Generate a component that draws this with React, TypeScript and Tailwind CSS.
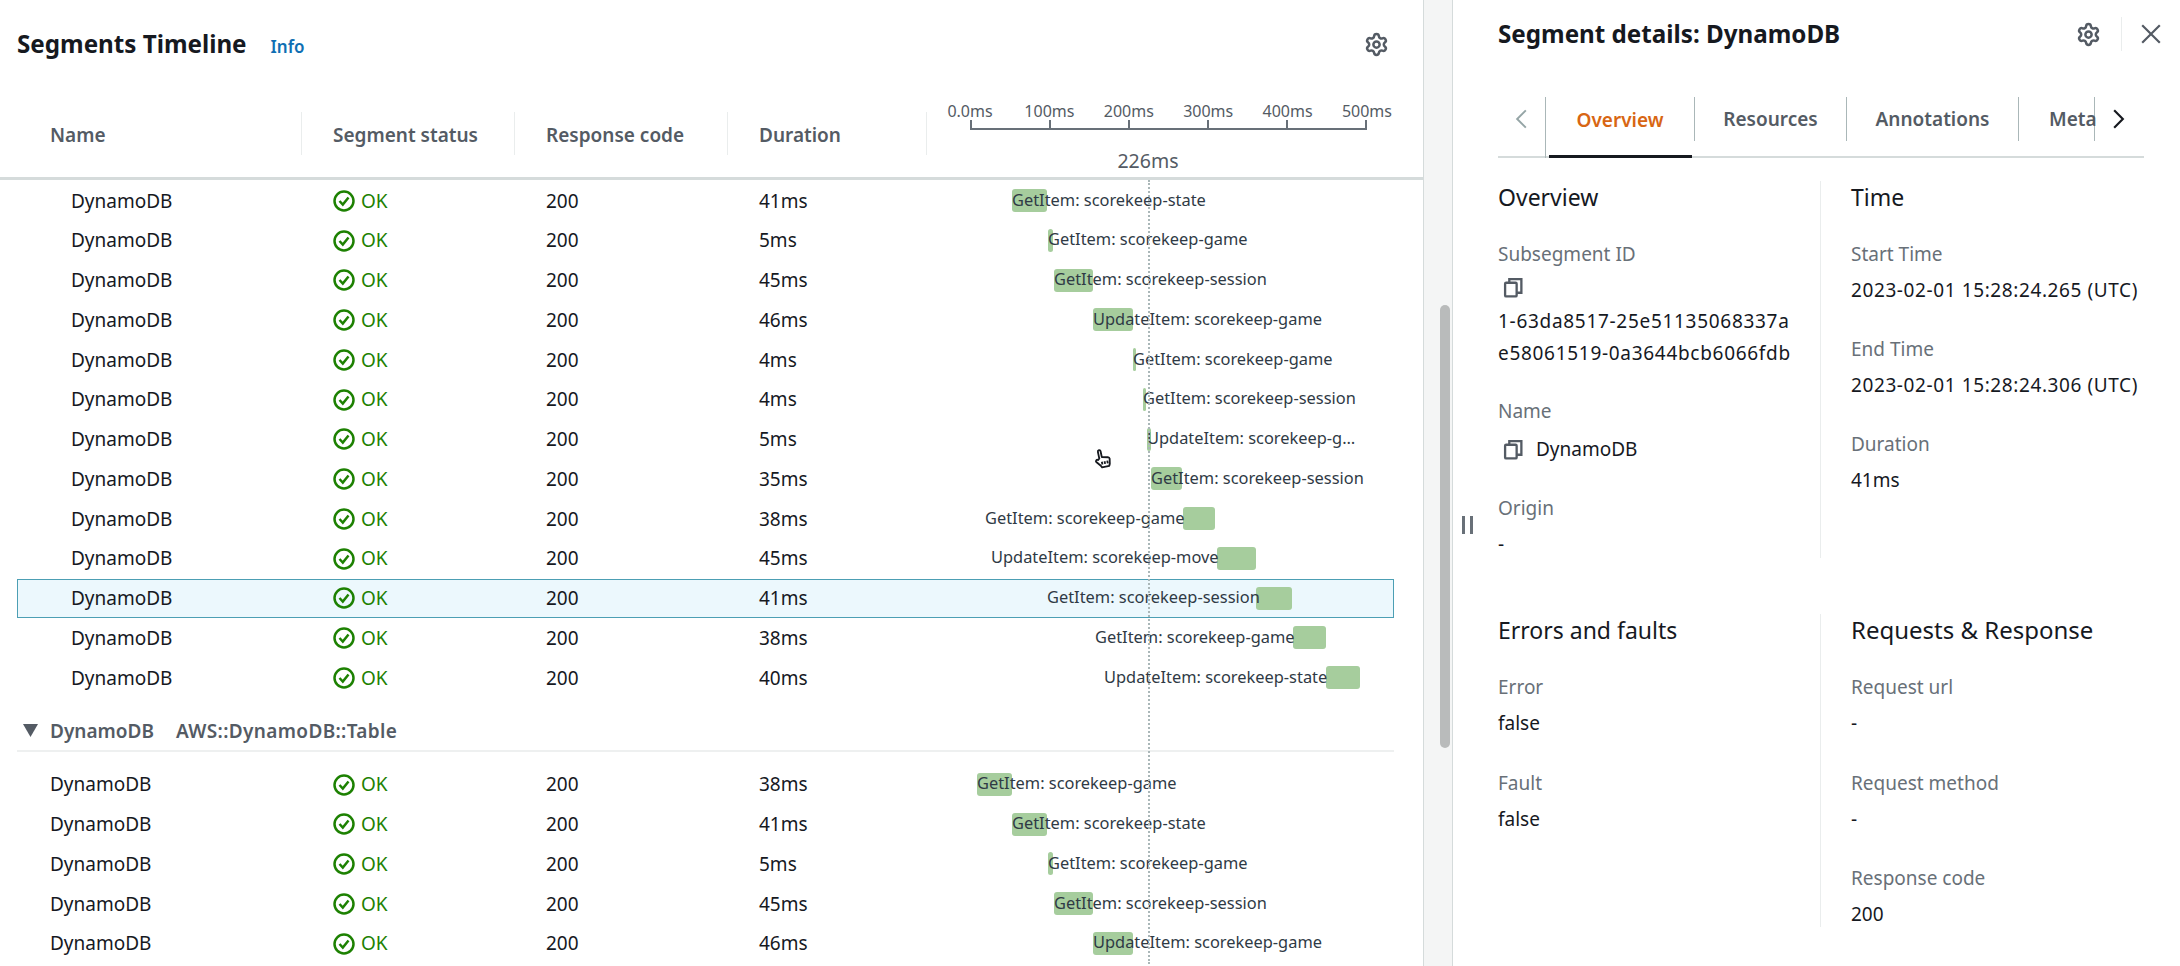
import React from 'react';
import { Settings } from 'lucide-react';

type Span = { label: string; duration: string; start: number; width: number; labelLeft?: number; selected?: boolean };

const firstGroup: Span[] = [
  { label: 'GetItem: scorekeep-state', duration: '41ms', start: 1012, width: 35 },
  { label: 'GetItem: scorekeep-game', duration: '5ms', start: 1048, width: 5 },
  { label: 'GetItem: scorekeep-session', duration: '45ms', start: 1054, width: 39 },
  { label: 'UpdateItem: scorekeep-game', duration: '46ms', start: 1093, width: 40 },
  { label: 'GetItem: scorekeep-game', duration: '4ms', start: 1133, width: 3 },
  { label: 'GetItem: scorekeep-session', duration: '4ms', start: 1143, width: 3 },
  { label: 'UpdateItem: scorekeep-g…', duration: '5ms', start: 1147, width: 4 },
  { label: 'GetItem: scorekeep-session', duration: '35ms', start: 1151, width: 31 },
  { label: 'GetItem: scorekeep-game', duration: '38ms', start: 1183, width: 32, labelLeft: 985 },
  { label: 'UpdateItem: scorekeep-move', duration: '45ms', start: 1217, width: 39, labelLeft: 991 },
  { label: 'GetItem: scorekeep-session', duration: '41ms', start: 1256, width: 36, labelLeft: 1047, selected: true },
  { label: 'GetItem: scorekeep-game', duration: '38ms', start: 1293, width: 33, labelLeft: 1095 },
  { label: 'UpdateItem: scorekeep-state', duration: '40ms', start: 1326, width: 34, labelLeft: 1104 },
];

const secondGroup: Span[] = [
  { label: 'GetItem: scorekeep-game', duration: '38ms', start: 977, width: 35 },
  { label: 'GetItem: scorekeep-state', duration: '41ms', start: 1012, width: 35 },
  { label: 'GetItem: scorekeep-game', duration: '5ms', start: 1048, width: 5 },
  { label: 'GetItem: scorekeep-session', duration: '45ms', start: 1054, width: 39 },
  { label: 'UpdateItem: scorekeep-game', duration: '46ms', start: 1093, width: 40 },
];

const ticks = ['0.0ms', '100ms', '200ms', '300ms', '400ms', '500ms'];

function CopyIcon() {
  return (
    <svg viewBox="0 0 20 20" fill="none" stroke="#545b64" strokeWidth="2.200" className="w-[21px] h-[21px]">
      <rect x="2" y="5.500" width="11" height="13" rx="1" />
      <path d="M6 5.500V2h11.500v13H13" />
    </svg>
  );
}

function OkIcon() {
  return (
    <svg viewBox="0 0 22 22" fill="none" stroke="#1d8102" strokeWidth="2.500" className="w-[22px] h-[22px] shrink-0">
      <circle cx="11" cy="11" r="9.500" />
      <path d="m6.500 11 3.300 3.500 5.700-7" />
    </svg>
  );
}

// offset of the timeline cell inside the row, everything in data is page x
const cellX = 926;

function Row({ span, indent }: { span: Span; indent: string }) {
  const labelX = (span.labelLeft ?? span.start) - cellX;
  return (
    <div className={`flex items-center h-[39.75px] border ${span.selected ? 'bg-[#ecf8fd] border-[#4c9fb4]' : 'border-transparent'}`}>
      <div className={`w-[315px] shrink-0 ${indent}`}>DynamoDB</div>
      <div className="w-[213px] shrink-0 flex items-center gap-[6px] text-[#1d8102]">
        <OkIcon />
        <span>OK</span>
      </div>
      <div className="w-[213px] shrink-0">200</div>
      <div className="w-[167px] shrink-0">{span.duration}</div>
      <div className="relative flex-1 h-full text-[16.400px]">
        <div
          className="absolute top-[7px] h-[23px] rounded-[3px] bg-[#a6cd9d]"
          style={{ left: span.start - cellX, width: span.width }}
        />
        <div className="absolute top-0 h-full pb-[2px] flex items-center whitespace-nowrap text-[#2f3a45]" style={{ left: labelX }}>
          {span.label}
        </div>
      </div>
    </div>
  );
}

function Field({ label, children, className = '' }: { label: string; children: React.ReactNode; className?: string }) {
  return (
    <div className={className}>
      <div className="text-[#687078] leading-[26px]">{label}</div>
      <div className="mt-[10px] text-[#16191f] leading-[26px]">{children}</div>
    </div>
  );
}

export default function App() {
  return (
    <div className="flex w-[2180px] h-[966px] overflow-hidden bg-white text-[19px] text-[#16191f] font-['Noto_Sans',sans-serif]">
      {/* timeline panel */}
      <div className="relative w-[1423px] shrink-0 overflow-hidden">
        <div className="flex items-center justify-between h-[88px] pl-[17px] pr-[34px]">
          <div className="flex items-baseline">
            <h2 className="text-[24.200px] font-bold">Segments Timeline</h2>
            <span className="ml-[24px] text-[17px] font-semibold text-[#0f6fb3]">Info</span>
          </div>
          <Settings className="w-[25px] h-[25px] text-[#545b64]" strokeWidth={2.4} />
        </div>
        <div className="flex h-[92px] border-b-[3px] border-[#d5dbdb] text-[#545b64] font-semibold">
          <div className="w-[301px] shrink-0 flex items-center h-[43px] mt-[24px] pt-[3px] pl-[50px]">Name</div>
          <div className="w-[213px] shrink-0 flex items-center h-[43px] mt-[24px] pt-[3px] pl-[31px] border-l border-[#eaeded]">Segment status</div>
          <div className="w-[213px] shrink-0 flex items-center h-[43px] mt-[24px] pt-[3px] pl-[31px] border-l border-[#eaeded]">Response code</div>
          <div className="w-[199px] shrink-0 flex items-center h-[43px] mt-[24px] pt-[3px] pl-[31px] border-l border-[#eaeded]">Duration</div>
          <div className="relative flex-1 h-[43px] mt-[24px] border-l border-[#eaeded] font-normal">
            <div className="absolute left-[43px] top-[-13px] w-[397px] text-[16px] text-[#545b64]">
              <div className="flex justify-between -mx-[22px] h-[24px] items-center">
                {ticks.map((t) => (
                  <span key={t} className="w-[44px] flex justify-center whitespace-nowrap">{t}</span>
                ))}
              </div>
              <div className="flex justify-between h-[10px] border-b-2 border-[#687078] -mt-[3px]">
                {ticks.map((t) => (
                  <span key={t} className="w-[2px] h-full bg-[#687078]" />
                ))}
              </div>
              <div className="absolute left-[133px] w-[90px] top-[47px] text-center text-[19.500px] text-[#545b64]">226ms</div>
            </div>
          </div>
        </div>
        <div className="relative pl-[17px] pr-[29px] pt-px">
          {firstGroup.map((s, i) => (
            <Row key={i} span={s} indent="pl-[53px]" />
          ))}
          <div className="flex items-center h-[40px] mt-[14px] border-b-2 border-[#eef0f0] font-semibold text-[#545b64]">
            <svg viewBox="0 0 15 13" className="w-[15px] h-[13px] ml-[6px] fill-[#545b64]">
              <path d="M0 0h15L7.500 13z" />
            </svg>
            <span className="ml-[12px]">DynamoDB</span>
            <span className="ml-[22px] tracking-[0.35px]">AWS::DynamoDB::Table</span>
          </div>
          <div className="h-[13px]" />
          {secondGroup.map((s, i) => (
            <Row key={i} span={s} indent="pl-[32px]" />
          ))}
          {/* 226ms marker */}
          <div className="absolute left-[1148px] top-0 bottom-0 border-l-2 border-dotted border-[#aab7b8]" />
        </div>
        <svg viewBox="0 0 24 24" className="absolute left-[1091px] top-[446px] w-[22px] h-[24px] -rotate-12" fill="white" stroke="#16191f" strokeWidth="2" strokeLinejoin="round">
          <path d="M9 12V4.500a1.500 1.500 0 0 1 3 0V11l6.500 1.500c1 .3 1.500 1 1.500 2l-1 5.500-1 2h-8l-1-2-4-5c-.8-1.200 1-3 2.500-1.700z" />
          <path d="M11 16v3M14 16v3M17 16v3" />
        </svg>
      </div>

      {/* split handle */}
      <div className="relative w-[29px] shrink-0 bg-[#f4f5f5] border-l border-[#d5dbdb]">
        <div className="absolute left-[16px] top-[305px] h-[443px] w-[10px] rounded-full bg-[#b9bbbb]" />
      </div>

      {/* details panel */}
      <div className="relative flex-1 min-w-0 pl-[45px] pr-[36px] bg-white border-l border-[#d5dbdb]">
        <div className="absolute left-[9px] top-[516px] h-[18px] w-[11px] border-x-[3px] border-[#687078]" />
        <div className="flex items-center h-[70px] pb-[2px]">
          <h2 className="text-[24.200px] font-bold flex-1">Segment details: DynamoDB</h2>
          <Settings className="w-[25px] h-[25px] text-[#545b64]" strokeWidth={2.4} />
          <div className="h-[34px] ml-[20px] border-l border-[#eaeded]" />
          <svg viewBox="0 0 20 20" stroke="#545b64" strokeWidth="2" className="w-[22px] h-[22px] ml-[18px] -mr-[18px]">
            <path d="m2 2 16 16M18 2 2 18" />
          </svg>
        </div>
        <div className="flex h-[88px] border-b-2 border-[#d5dbdb] text-[#545b64] font-semibold pt-[27px]">
          <div className="w-[47px] flex items-center h-[44px] pl-[17px]">
            <svg viewBox="0 0 12 20" fill="none" stroke="#95a5a6" strokeWidth="1.800" className="w-[13px] h-[22px]">
              <path d="M10 2 2 10l8 8" />
            </svg>
          </div>
          <div className="relative w-[149px] h-[61px] border-l border-[#aab7b8]">
            <div className="flex items-center justify-center h-[46px] text-[#d86613]">Overview</div>
            <div className="absolute left-[3px] right-[2px] bottom-0 h-[3px] bg-[#16191f]" />
          </div>
          <div className="w-[152px] h-[44px] flex items-center justify-center border-l border-[#aab7b8]">Resources</div>
          <div className="w-[172px] h-[44px] flex items-center justify-center border-l border-[#aab7b8]">Annotations</div>
          <div className="w-[77px] h-[44px] flex items-center pl-[30px] border-x border-[#aab7b8]">Meta</div>
          <div className="h-[44px] flex items-center pl-[17px]">
            <svg viewBox="0 0 12 20" fill="none" stroke="#16191f" strokeWidth="2" className="w-[13px] h-[22px]">
              <path d="m2 2 8 8-8 8" />
            </svg>
          </div>
        </div>

        <div className="grid grid-cols-[322px_1fr] mt-[23px]">
          <div className="h-[377px]">
            <h3 className="text-[23px] leading-[32px]">Overview</h3>
            <div className="mt-[28px] text-[#687078] leading-[26px]">Subsegment ID</div>
            <div className="mt-[10px] ml-[5px] h-[21px]"><CopyIcon /></div>
            <div className="mt-[8px] leading-[31.500px] tracking-[0.7px] whitespace-nowrap">1-63da8517-25e51135068337a<br />e58061519-0a3644bcb6066fdb</div>
            <div className="mt-[29px] text-[#687078] leading-[26px]">Name</div>
            <div className="mt-[12px] flex items-center gap-[12px] ml-[5px] leading-[26px]"><CopyIcon />DynamoDB</div>
            <Field label="Origin" className="mt-[33px]">-</Field>
          </div>
          <div className="h-[377px] pl-[30px] border-l border-[#eaeded]">
            <h3 className="text-[23px] leading-[32px]">Time</h3>
            <Field label="Start Time" className="mt-[28px]"><span className="tracking-[0.6px]">2023-02-01 15:28:24.265 (UTC)</span></Field>
            <Field label="End Time" className="mt-[33px]"><span className="tracking-[0.6px]">2023-02-01 15:28:24.306 (UTC)</span></Field>
            <Field label="Duration" className="mt-[33px]">41ms</Field>
          </div>
        </div>

        <div className="grid grid-cols-[322px_1fr] mt-[56px]">
          <div className="h-[313px]">
            <h3 className="text-[23px] leading-[32px]">Errors and faults</h3>
            <Field label="Error" className="mt-[28px]">false</Field>
            <Field label="Fault" className="mt-[34px]">false</Field>
          </div>
          <div className="h-[313px] pl-[30px] border-l border-[#eaeded]">
            <h3 className="text-[24px] leading-[32px]">Requests &amp; Response</h3>
            <Field label="Request url" className="mt-[28px]">-</Field>
            <Field label="Request method" className="mt-[34px]">-</Field>
            <Field label="Response code" className="mt-[33px]">200</Field>
          </div>
        </div>
      </div>
    </div>
  );
}
